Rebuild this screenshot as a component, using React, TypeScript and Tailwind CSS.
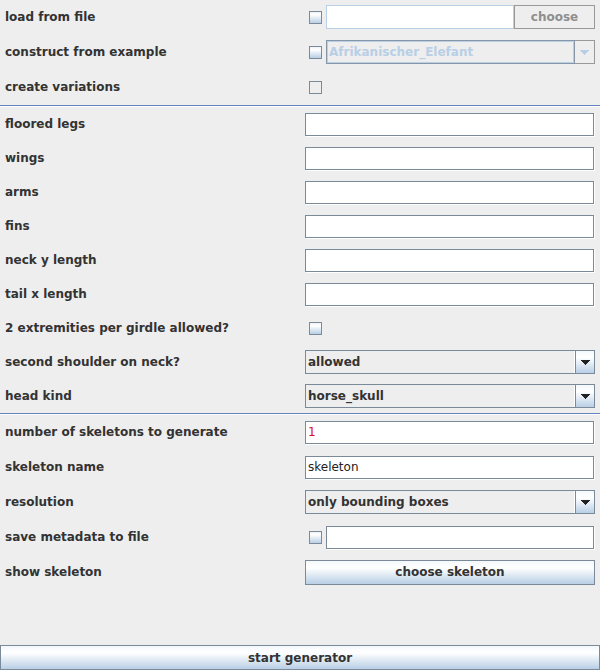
import React from "react";

const lbl = "w-[305px] shrink-0 pl-[5px] text-[12px] font-bold text-[#333333] leading-none whitespace-nowrap";
const grad = "bg-[linear-gradient(to_bottom,#f4f8fc,#ffffff_30%,#b8cfe5)]";

function Check({ filled = true }: { filled?: boolean }) {
  return (
    <div
      className={`w-[13px] h-[13px] shrink-0 border border-[#7a8a99] ${filled ? "bg-[linear-gradient(to_bottom,#eef3f9,#ffffff_25%,#b8cfe5)]" : "bg-[#eeeeee]"}`}
    />
  );
}

function Arrow({ color }: { color: string }) {
  return (
    <svg width="9" height="5" viewBox="0 0 9 5" shapeRendering="crispEdges">
      <rect x="0" y="0" width="9" height="1" fill={color} />
      <rect x="1" y="1" width="7" height="1" fill={color} />
      <rect x="2" y="2" width="5" height="1" fill={color} />
      <rect x="3" y="3" width="3" height="1" fill={color} />
      <rect x="4" y="4" width="1" height="1" fill={color} />
    </svg>
  );
}

function Field({ children, className = "" }: { children?: React.ReactNode; className?: string }) {
  return (
    <div
      className={`h-[23px] bg-white border border-[#7a8a99] shadow-[1px_1px_0_#ffffff] flex items-center pl-[2px] text-[12px] leading-none ${className}`}
    >
      {children}
    </div>
  );
}

function Combo({ value }: { value: string }) {
  return (
    <div className="w-[290px] h-[24px] border border-[#7a8a99] flex">
      <div className="flex-1 bg-[#eeeeee] border-r border-white flex items-center pl-[2px] text-[12px] font-bold text-[#333333] leading-none">
        {value}
      </div>
      <div className={`w-[19px] border-l border-[#7a8a99] ${grad} flex items-center justify-center`}>
        <Arrow color="#222222" />
      </div>
    </div>
  );
}

function Row({ label, children }: { label: string; children: React.ReactNode }) {
  return (
    <div className="flex items-center h-[24px]">
      <div className={lbl}>{label}</div>
      {children}
    </div>
  );
}

function Sep() {
  return (
    <div>
      <div className="h-[1px] bg-[#6382bf]" />
      <div className="h-[1px] bg-white" />
    </div>
  );
}

export default function App() {
  return (
    <div className="w-[600px] h-[670px] bg-[#eeeeee] flex flex-col font-['DejaVu_Sans',sans-serif] overflow-hidden">
      {/* top section */}
      <div className="flex flex-col gap-[11px] pt-[5px] pb-[6px]">
        <Row label="load from file">
          <div className="flex items-center pl-[4px]">
            <Check />
            <div className="ml-[4px] w-[188px] h-[24px] bg-white border border-[#b8cfe5]" />
            <div className="w-[81px] h-[24px] border border-[#999999] bg-[#eeeeee] flex items-center justify-center text-[12px] font-bold text-[#8e8e8e] leading-none">
              choose
            </div>
          </div>
        </Row>
        <Row label="construct from example">
          <div className="flex items-center pl-[4px]">
            <Check />
            <div className="ml-[4px] w-[269px] h-[24px] flex">
              <div className="flex-1 border border-[#8796a6] flex">
                <div className="flex-1 border border-[#b8cfe5] bg-[#eeeeee] flex items-center pl-[1px] text-[12px] font-bold text-[#b8cfe5] leading-none">
                  Afrikanischer_Elefant
                </div>
              </div>
              <div className="w-[20px] border border-l-0 border-[#999999] bg-[#eeeeee] flex items-center justify-center">
                <Arrow color="#b8cfe5" />
              </div>
            </div>
          </div>
        </Row>
        <Row label="create variations">
          <div className="pl-[4px]">
            <Check filled={false} />
          </div>
        </Row>
      </div>
      <Sep />
      {/* middle section */}
      <div className="flex flex-col gap-[10px] py-[5px]">
        <Row label="floored legs">
          <Field className="w-[289px]" />
        </Row>
        <Row label="wings">
          <Field className="w-[289px]" />
        </Row>
        <Row label="arms">
          <Field className="w-[289px]" />
        </Row>
        <Row label="fins">
          <Field className="w-[289px]" />
        </Row>
        <Row label="neck y length">
          <Field className="w-[289px]" />
        </Row>
        <Row label="tail x length">
          <Field className="w-[289px]" />
        </Row>
        <Row label="2 extremities per girdle allowed?">
          <div className="pl-[4px]">
            <Check />
          </div>
        </Row>
        <Row label="second shoulder on neck?">
          <Combo value="allowed" />
        </Row>
        <Row label="head kind">
          <Combo value="horse_skull" />
        </Row>
      </div>
      <Sep />
      {/* lower section */}
      <div className="flex flex-col gap-[11px] pt-[5px]">
        <Row label="number of skeletons to generate">
          <Field className="w-[289px] text-[#e01010]">1</Field>
        </Row>
        <Row label="skeleton name">
          <Field className="w-[289px] text-[#222222]">skeleton</Field>
        </Row>
        <Row label="resolution">
          <Combo value="only bounding boxes" />
        </Row>
        <Row label="save metadata to file">
          <div className="flex items-center pl-[4px]">
            <Check />
            <Field className="ml-[4px] w-[268px]" />
          </div>
        </Row>
        <Row label="show skeleton">
          <div
            className={`w-[290px] h-[25px] border border-[#7a8a99] ${grad} flex items-center justify-center text-[12px] font-bold text-[#333333] leading-none`}
          >
            choose skeleton
          </div>
        </Row>
      </div>
      <div className="flex-1" />
      <div
        className={`h-[25px] w-[600px] border border-[#7a8a99] ${grad} flex items-center justify-center text-[12px] font-bold text-[#333333] leading-none`}
      >
        start generator
      </div>
    </div>
  );
}
